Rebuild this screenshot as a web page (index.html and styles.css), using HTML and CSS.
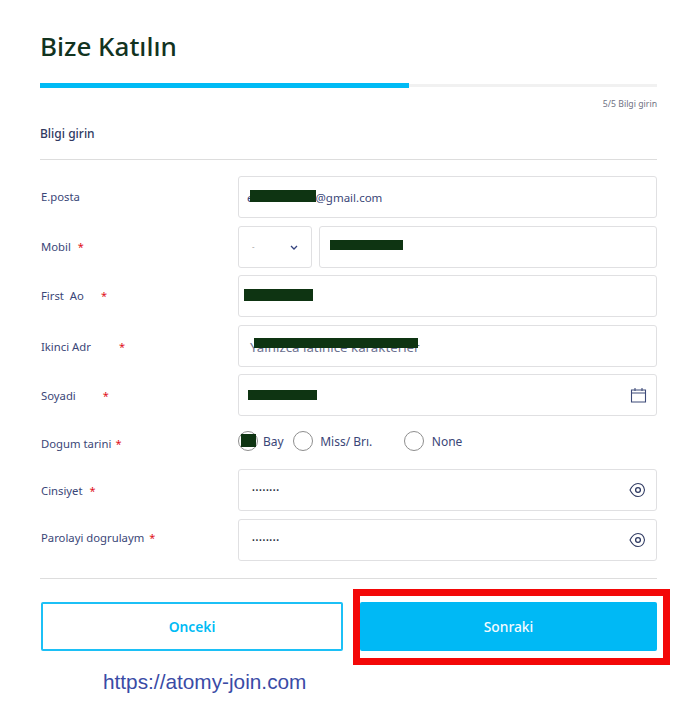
FILE: index.html
```html
<!DOCTYPE html>
<html lang="tr">
<head>
<meta charset="utf-8">
<title>Bize Katılın</title>
<link rel="stylesheet" href="styles.css">
</head>
<body>
<main class="page">
  <h1 class="title">Bize Katılın</h1>
  <div class="progress"><div class="progress-fill"></div></div>
  <p class="step">5/5 Bilgi girin</p>
  <h2 class="section">Bligi girin</h2>
  <form class="form">
    <div class="row">
      <span class="label">E.posta</span>
      <div class="field field-email"><span class="email-start">e</span><span class="mask mask-email"></span><span>@gmail.com</span></div>
    </div>
    <div class="row">
      <span class="label">Mobil<i class="star star-mobil">*</i></span>
      <div class="phone">
        <div class="field select">
          <span class="dot">-</span>
          <svg class="chevron" viewBox="0 0 8 5" width="8" height="5"><path d="M1 1l3 3 3-3" fill="none" stroke="#34427e" stroke-width="1.3"/></svg>
        </div>
        <div class="field field-phone"><span class="mask mask-phone"></span></div>
      </div>
    </div>
    <div class="row">
      <span class="label">First&nbsp; Ao<i class="star star-first">*</i></span>
      <div class="field field-first"><span class="mask mask-first"></span></div>
    </div>
    <div class="row">
      <span class="label label-low">Ikinci Adr<i class="star star-second">*</i></span>
      <div class="field field-second"><span class="placeholder">Yalnızca latinlce karakterler</span><span class="mask mask-second"></span></div>
    </div>
    <div class="row">
      <span class="label label-low">Soyadi<i class="star star-last">*</i></span>
      <div class="field field-last">
        <span class="mask mask-last"></span>
        <svg class="icon" viewBox="0 0 17 16" width="17" height="16"><path d="M1.5 3h14v12h-14zM1.5 6h14M5 1v3M12 1v3" fill="none" stroke="#3d4a78" stroke-width="1.1"/></svg>
      </div>
    </div>
    <div class="row row-radio">
      <span class="label label-birth">Dogum tarini<i class="star star-birth">*</i></span>
      <div class="radios">
        <span class="radio-item item-bay"><span class="radio"><span class="mask mask-radio"></span></span>Bay</span>
        <span class="radio-item item-miss"><span class="radio"></span>Miss/ Brı.</span>
        <span class="radio-item item-none"><span class="radio"></span>None</span>
      </div>
    </div>
    <div class="row">
      <span class="label label-gender">Cinsiyet<i class="star star-gender">*</i></span>
      <div class="field field-pass">
        <span class="dots">••••••••</span>
        <svg class="icon" viewBox="0 0 17 16" width="17" height="16"><path d="M1 8C3 4 5 1.500 9 1.500c4 0 6 3 6.500 6.500-.5 3.500-2.500 6.500-6.500 6.500C5 14.500 3 12 1 8z" fill="none" stroke="#2f3a62" stroke-width="1.1"/><circle cx="9" cy="8" r="2.400" fill="none" stroke="#2f3a62" stroke-width="1.300"/></svg>
      </div>
    </div>
    <div class="row row-last">
      <span class="label label-high">Parolayi dogrulaym<i class="star star-confirm">*</i></span>
      <div class="field field-pass">
        <span class="dots">••••••••</span>
        <svg class="icon" viewBox="0 0 17 16" width="17" height="16"><path d="M1 8C3 4 5 1.500 9 1.500c4 0 6 3 6.500 6.500-.5 3.500-2.500 6.500-6.500 6.500C5 14.500 3 12 1 8z" fill="none" stroke="#2f3a62" stroke-width="1.1"/><circle cx="9" cy="8" r="2.400" fill="none" stroke="#2f3a62" stroke-width="1.300"/></svg>
      </div>
    </div>
    <div class="actions">
      <button type="button" class="btn btn-prev">Onceki</button>
      <button type="button" class="btn btn-next">Sonraki</button>
    </div>
  </form>
  <p class="link">https://atomy-join.com</p>
</main>
</body>
</html>
```
FILE: styles.css
```css
*, *::before, *::after { box-sizing: border-box; }
html, body { margin: 0; padding: 0; background: #fff; }
body { width: 700px; height: 718px; overflow: hidden; font-family: "Noto Sans", "Open Sans", sans-serif; color: #3a4677; }
.page { padding: 28px 43px 0 40px; }
.title { margin: 0; font-size: 26px; line-height: 36px; font-weight: 500; color: #12331f; }
.progress { margin-top: 19px; height: 5px; background: #f1f1f1; background-clip: content-box; padding: 1px 0; position: relative; }
.progress-fill { position: absolute; left: 0; top: 0; width: 369px; height: 5px; background: #00bbf5; }
.step { margin: 10px 0 0; height: 12px; text-align: right; font-size: 8.700px; line-height: 12px; color: #6f7283; }
.section { margin: 15px 0 0; padding-bottom: 16px; border-bottom: 1px solid #ddd; font-size: 12px; line-height: 18px; font-weight: 500; color: #30395f; }
.form { display: block; margin-top: 16px; }
.row { display: grid; grid-template-columns: 198px 1fr; align-items: center; min-height: 42px; margin-bottom: 7.500px; }
.label { font-size: 11.300px; line-height: 16px; padding-left: 1px; color: #3a4677; white-space: nowrap; }
.label-low { padding-top: 2px; }
.label-high { padding-bottom: 4px; }
.label-birth { padding-top: 6px; }
.label-gender { padding-top: 2px; }
.star { font-style: normal; color: #e01020; font-size: 11px; }
.star-mobil { margin-left: 7px; }
.star-first { margin-left: 17px; }
.star-second { margin-left: 28px; }
.star-last { margin-left: 27px; }
.star-birth { margin-left: 4px; }
.star-gender { margin-left: 7px; }
.star-confirm { margin-left: 5px; }
.field { position: relative; display: flex; align-items: center; height: 42px; border: 1.500px solid #e0e0e2; border-radius: 3px; background: #fff; font-size: 11.500px; color: #3a4677; }
.phone { display: grid; grid-template-columns: 74px 1fr; column-gap: 7px; }
.select { justify-content: space-between; padding: 0 13px 0 13px; }
.dot { font-size: 8px; color: #aaa; }
.chevron { margin-top: 1px; }
.mask { display: block; background: #0e3412; flex: none; }
.field-email { padding-left: 8px; }
.mask-email { width: 66px; height: 12px; margin: -2px 0 0 -4px; }
.field-phone { padding-left: 10px; }
.mask-phone { width: 73px; height: 10px; margin-top: -3px; }
.field-first { padding-left: 5px; }
.mask-first { width: 69px; height: 12px; margin-top: -3px; }
.field-second { padding-left: 11px; }
.placeholder { font-size: 13.300px; color: #6b7190; white-space: nowrap; padding-top: 3px; }
.mask-second { position: absolute; left: 15px; top: 12px; width: 164px; height: 10px; }
.field-last { justify-content: space-between; padding: 0 9px 0 9px; }
.mask-last { width: 69px; height: 10px; margin-top: -1px; }
.icon { flex: none; }
.field-pass { justify-content: space-between; padding: 0 10px 0 13px; }
.dots { font-size: 7.500px; letter-spacing: 0.650px; color: #1d2a3a; }
.row-radio { min-height: 30px; margin: 10px 0 13px; }
.row-last { margin-bottom: 0; }
.radios { display: flex; align-items: center; font-size: 12px; color: #3a4677; }
.radio-item { display: inline-flex; align-items: center; gap: 5px; }
.item-bay { margin-right: 9.500px; }
.item-miss { margin-right: 31.500px; gap: 7px; }
.item-none { gap: 8px; }
.radio { position: relative; width: 20px; height: 20px; border: 1px solid #8e8e8e; border-radius: 50%; background: #fff; flex: none; }
.mask-radio { position: absolute; left: 2px; top: 2px; width: 15px; height: 13px; }
.actions { margin-top: 17px; padding-top: 23px; border-top: 1px solid #ddd; display: grid; grid-template-columns: 302px 297px; column-gap: 17px; padding-left: 1px; }
.btn { position: relative; height: 49px; padding: 1px 0 0; border-radius: 2px; font-family: inherit; font-size: 13.800px; font-weight: 600; cursor: pointer; }
.btn-prev { border: 2px solid #1cc0f6; background: #fff; color: #00bbf5; }
.btn-next { border: 0; background: #00b9f5; color: #f4fbff; font-weight: 500; }
.btn-next::after { content: ""; position: absolute; left: -7px; top: -13px; width: 317px; height: 76px; border: 7px solid #f30808; }
.link { margin: 19px 0 0 63px; font-family: "Liberation Sans", Arial, sans-serif; font-size: 20.800px; line-height: 24px; color: #3a4ba6; }
```
